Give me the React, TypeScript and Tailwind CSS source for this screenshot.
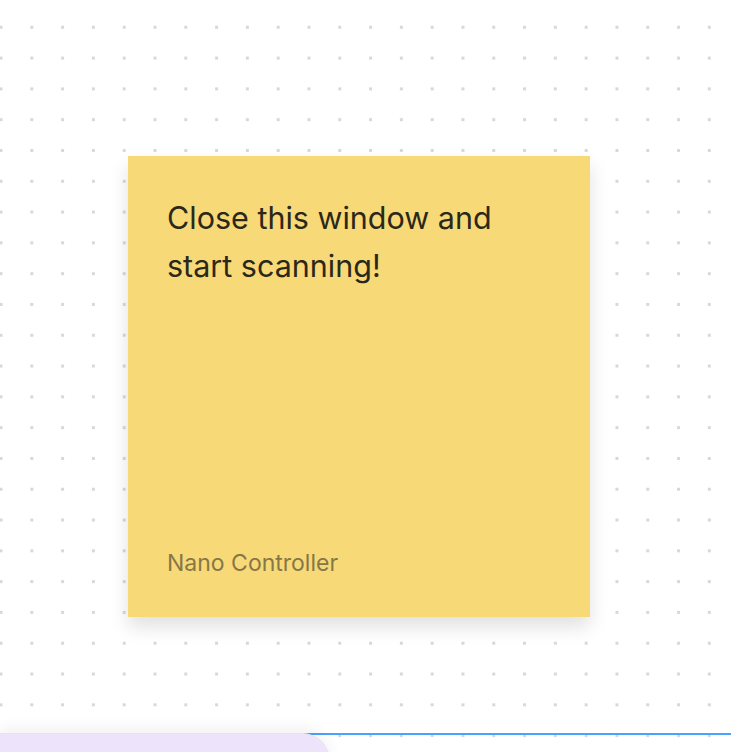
import React from "react";

const dots = {
  backgroundImage: "radial-gradient(circle, #d8d8d8 1.4px, transparent 1.7px)",
  backgroundSize: "30.8px 30.8px",
  backgroundPosition: "-14.4px 11.9px",
};

export default function App() {
  return (
    <div
      className="relative h-[752px] w-full overflow-hidden bg-white font-['Inter','Noto_Sans',sans-serif]"
      style={dots}
    >
      <div className="pl-[128px] pt-[156px]">
        <div className="flex h-[461px] w-[462px] flex-col justify-between bg-[#f8d978] px-[39px] pb-[40px] pt-[38px] shadow-[0_10px_18px_rgba(0,0,0,0.12)]">
          <p className="text-[30.5px] leading-[48px] text-[#2b2818]">
            Close this window and start scanning!
          </p>
          <p className="text-[23px] leading-[28px] text-[#857747]">Nano Controller</p>
        </div>
      </div>

      {/* bottom toolbar peeking in */}
      <div className="absolute bottom-0 left-0 right-0 h-[19px]">
        <div className="absolute left-[300px] right-0 top-0 h-[2px] bg-[#4aa2ff]" />
        <div className="absolute left-0 top-0 h-[40px] w-[330px] rounded-tr-[28px] border-t border-[#e6e2ee] bg-[#ede4fb] shadow-[0_-6px_14px_rgba(0,0,0,0.05)]" />
      </div>
    </div>
  );
}
